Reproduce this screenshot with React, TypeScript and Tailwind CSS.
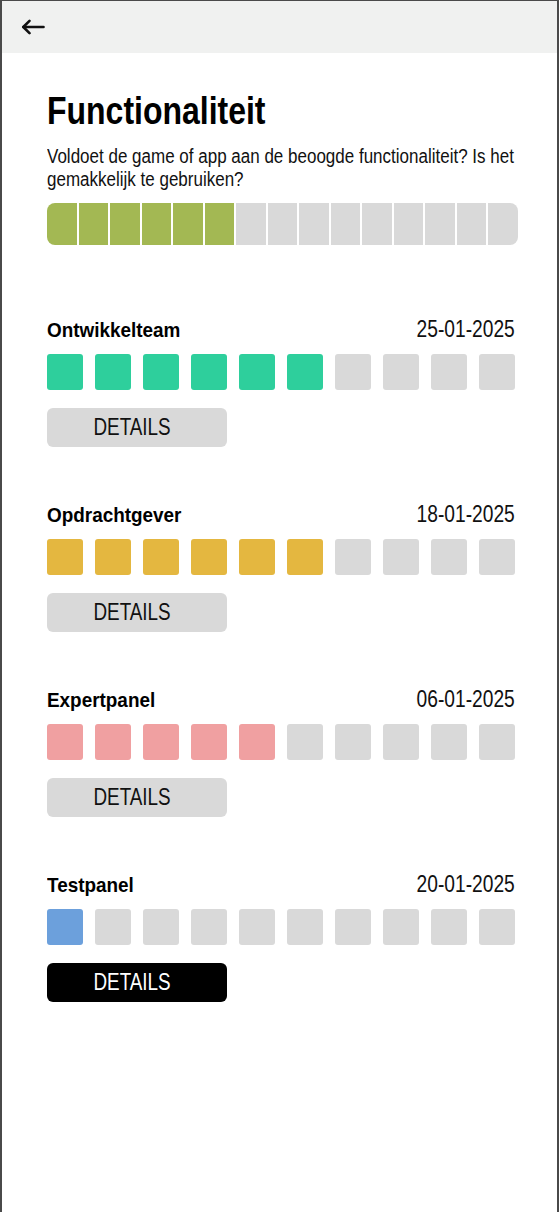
import React from 'react';

type Review = {
  name: string;
  date: string;
  score: number;
  color: string;
  active?: boolean;
};

const reviews: Review[] = [
  { name: 'Ontwikkelteam', date: '25-01-2025', score: 6, color: 'bg-[#2ecf9c]' },
  { name: 'Opdrachtgever', date: '18-01-2025', score: 6, color: 'bg-[#e4b740]' },
  { name: 'Expertpanel', date: '06-01-2025', score: 5, color: 'bg-[#f0a0a1]' },
  { name: 'Testpanel', date: '20-01-2025', score: 1, color: 'bg-[#6ca0dc]', active: true },
];

const font = { fontFamily: '"Liberation Sans", Arial, sans-serif' };

// the design uses a condensed face; squeeze the regular one to match
function Narrow({ children, className = '' }: { children: React.ReactNode; className?: string }) {
  return <span className={`inline-block whitespace-nowrap ${className}`}>{children}</span>;
}

function BackArrow() {
  return (
    <svg width="24" height="16" viewBox="0 0 24 16" fill="none" stroke="#111" strokeWidth="2.6" strokeLinecap="round" strokeLinejoin="round">
      <path d="M22.5 8H2.5" />
      <path d="M8.5 1.8L2.3 8l6.2 6.2" />
    </svg>
  );
}

function ReviewBlock({ review }: { review: Review }) {
  return (
    <div className="w-[468px]">
      <div className="flex h-[24px] items-baseline justify-between">
        <Narrow className="origin-left scale-x-[0.9] text-[21px] font-bold leading-none text-black">{review.name}</Narrow>
        <Narrow className="origin-right scale-x-[0.8] text-[24px] leading-none text-[#111]">{review.date}</Narrow>
      </div>
      <div className="mt-[13px] flex gap-[12px]">
        {Array.from({ length: 10 }).map((_, i) => (
          <div
            key={i}
            className={`h-[36px] w-[36px] rounded-[3px] ${i < review.score ? review.color : 'bg-[#d9d9d9]'}`}
          />
        ))}
      </div>
      <button
        className={`mt-[18px] flex h-[39px] w-[180px] items-center justify-center rounded-[6px] pr-[9px] ${
          review.active ? 'bg-black text-white' : 'bg-[#d9d9d9] text-[#111]'
        }`}
        style={font}
      >
        <Narrow className="origin-center scale-x-[0.82] text-[23px] leading-none">DETAILS</Narrow>
      </button>
    </div>
  );
}

export default function App() {
  return (
    <div
      className="min-h-[1212px] w-[559px] overflow-hidden border-l-2 border-r-2 border-t border-[#4a4a4a] bg-white"
      style={font}
    >
      <div className="flex h-[52px] items-center bg-[#f0f1f0] pl-[19px]">
        <BackArrow />
      </div>

      <div className="pl-[45px] pt-[38px]">
        <h1 className="text-[39px] font-bold leading-none text-black">
          <Narrow className="origin-left scale-x-[0.82]">Functionaliteit</Narrow>
        </h1>
        <div className="mt-[15px] flex w-[470px] flex-col text-[20px] leading-[22.5px] text-[#111]">
          <Narrow className="origin-left scale-x-[0.85]">
            Voldoet de game of app aan de beoogde functionaliteit? Is het
          </Narrow>
          <Narrow className="origin-left scale-x-[0.85]">gemakkelijk te gebruiken?</Narrow>
        </div>

        <div className="mt-[13px] flex h-[42px] w-[471px] gap-[2px] overflow-hidden rounded-[8px]">
          {Array.from({ length: 15 }).map((_, i) => (
            <div key={i} className={`flex-1 ${i < 6 ? 'bg-[#a3b853]' : 'bg-[#d9d9d9]'}`} />
          ))}
        </div>

        <div className="mt-[72px] flex flex-col gap-[55px]">
          {reviews.map((r) => (
            <ReviewBlock key={r.name} review={r} />
          ))}
        </div>
      </div>
    </div>
  );
}
